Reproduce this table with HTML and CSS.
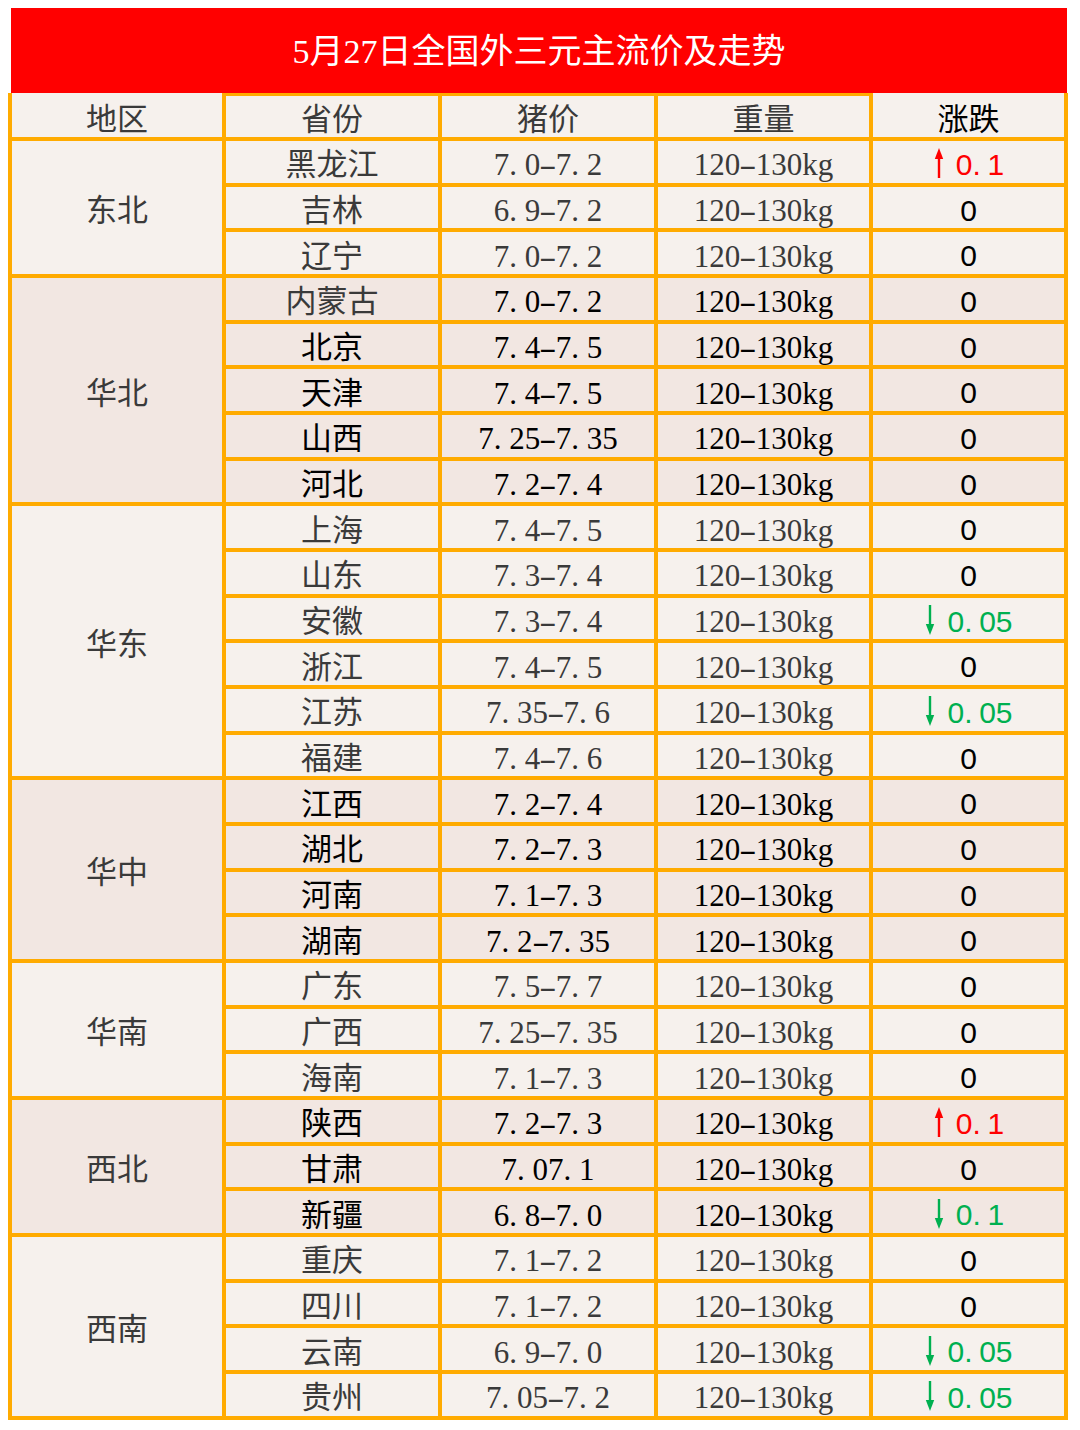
FILE: index.html
```html
<!DOCTYPE html>
<html lang="zh-CN">
<head>
<meta charset="utf-8">
<title>5月27日全国外三元主流价及走势</title>
<link rel="stylesheet" href="styles.css">
</head>
<body>
<div class="page">
  <div class="title">5月27日全国外三元主流价及走势</div>
  <div class="sheet">
    <div class="cell hd edge">地区</div>
    <div class="cell hd">省份</div>
    <div class="cell hd">猪价</div>
    <div class="cell hd">重量</div>
    <div class="cell hd edge k">涨跌</div>

    <div class="cell s3">东北</div>
    <div class="cell">黑龙江</div><div class="cell">7<span class="p">.</span>0<span class="m">-</span>7<span class="p">.</span>2</div><div class="cell">120<span class="m">-</span>130kg</div><div class="cell chg up"><svg class="ar" viewBox="0 0 12 30"><path d="M6 9V30"/><polygon points="6,0 1.8,11 10.2,11"/></svg>0<span class="p">.</span>1</div>
    <div class="cell">吉林</div><div class="cell">6<span class="p">.</span>9<span class="m">-</span>7<span class="p">.</span>2</div><div class="cell">120<span class="m">-</span>130kg</div><div class="cell chg">0</div>
    <div class="cell">辽宁</div><div class="cell">7<span class="p">.</span>0<span class="m">-</span>7<span class="p">.</span>2</div><div class="cell">120<span class="m">-</span>130kg</div><div class="cell chg">0</div>

    <div class="cell s5 d">华北</div>
    <div class="cell d">内蒙古</div><div class="cell d k">7<span class="p">.</span>0<span class="m">-</span>7<span class="p">.</span>2</div><div class="cell d k">120<span class="m">-</span>130kg</div><div class="cell d chg">0</div>
    <div class="cell d k">北京</div><div class="cell d k">7<span class="p">.</span>4<span class="m">-</span>7<span class="p">.</span>5</div><div class="cell d k">120<span class="m">-</span>130kg</div><div class="cell d chg">0</div>
    <div class="cell d k">天津</div><div class="cell d k">7<span class="p">.</span>4<span class="m">-</span>7<span class="p">.</span>5</div><div class="cell d k">120<span class="m">-</span>130kg</div><div class="cell d chg">0</div>
    <div class="cell d k">山西</div><div class="cell d k">7<span class="p">.</span>25<span class="m">-</span>7<span class="p">.</span>35</div><div class="cell d k">120<span class="m">-</span>130kg</div><div class="cell d chg">0</div>
    <div class="cell d k">河北</div><div class="cell d k">7<span class="p">.</span>2<span class="m">-</span>7<span class="p">.</span>4</div><div class="cell d k">120<span class="m">-</span>130kg</div><div class="cell d chg">0</div>

    <div class="cell s6">华东</div>
    <div class="cell">上海</div><div class="cell">7<span class="p">.</span>4<span class="m">-</span>7<span class="p">.</span>5</div><div class="cell">120<span class="m">-</span>130kg</div><div class="cell chg">0</div>
    <div class="cell">山东</div><div class="cell">7<span class="p">.</span>3<span class="m">-</span>7<span class="p">.</span>4</div><div class="cell">120<span class="m">-</span>130kg</div><div class="cell chg">0</div>
    <div class="cell">安徽</div><div class="cell">7<span class="p">.</span>3<span class="m">-</span>7<span class="p">.</span>4</div><div class="cell">120<span class="m">-</span>130kg</div><div class="cell chg dn"><svg class="ar" viewBox="0 0 12 30"><path d="M6 0V21"/><polygon points="6,30 1.8,19 10.2,19"/></svg>0<span class="p">.</span>05</div>
    <div class="cell">浙江</div><div class="cell">7<span class="p">.</span>4<span class="m">-</span>7<span class="p">.</span>5</div><div class="cell">120<span class="m">-</span>130kg</div><div class="cell chg">0</div>
    <div class="cell">江苏</div><div class="cell">7<span class="p">.</span>35<span class="m">-</span>7<span class="p">.</span>6</div><div class="cell">120<span class="m">-</span>130kg</div><div class="cell chg dn"><svg class="ar" viewBox="0 0 12 30"><path d="M6 0V21"/><polygon points="6,30 1.8,19 10.2,19"/></svg>0<span class="p">.</span>05</div>
    <div class="cell">福建</div><div class="cell">7<span class="p">.</span>4<span class="m">-</span>7<span class="p">.</span>6</div><div class="cell">120<span class="m">-</span>130kg</div><div class="cell chg">0</div>

    <div class="cell s4 d">华中</div>
    <div class="cell d k">江西</div><div class="cell d k">7<span class="p">.</span>2<span class="m">-</span>7<span class="p">.</span>4</div><div class="cell d k">120<span class="m">-</span>130kg</div><div class="cell d chg">0</div>
    <div class="cell d k">湖北</div><div class="cell d k">7<span class="p">.</span>2<span class="m">-</span>7<span class="p">.</span>3</div><div class="cell d k">120<span class="m">-</span>130kg</div><div class="cell d chg">0</div>
    <div class="cell d k">河南</div><div class="cell d k">7<span class="p">.</span>1<span class="m">-</span>7<span class="p">.</span>3</div><div class="cell d k">120<span class="m">-</span>130kg</div><div class="cell d chg">0</div>
    <div class="cell d k">湖南</div><div class="cell d k">7<span class="p">.</span>2<span class="m">-</span>7<span class="p">.</span>35</div><div class="cell d k">120<span class="m">-</span>130kg</div><div class="cell d chg">0</div>

    <div class="cell s3">华南</div>
    <div class="cell">广东</div><div class="cell">7<span class="p">.</span>5<span class="m">-</span>7<span class="p">.</span>7</div><div class="cell">120<span class="m">-</span>130kg</div><div class="cell chg">0</div>
    <div class="cell">广西</div><div class="cell">7<span class="p">.</span>25<span class="m">-</span>7<span class="p">.</span>35</div><div class="cell">120<span class="m">-</span>130kg</div><div class="cell chg">0</div>
    <div class="cell">海南</div><div class="cell">7<span class="p">.</span>1<span class="m">-</span>7<span class="p">.</span>3</div><div class="cell">120<span class="m">-</span>130kg</div><div class="cell chg">0</div>

    <div class="cell s3 d">西北</div>
    <div class="cell d k">陕西</div><div class="cell d k">7<span class="p">.</span>2<span class="m">-</span>7<span class="p">.</span>3</div><div class="cell d k">120<span class="m">-</span>130kg</div><div class="cell d chg up"><svg class="ar" viewBox="0 0 12 30"><path d="M6 9V30"/><polygon points="6,0 1.8,11 10.2,11"/></svg>0<span class="p">.</span>1</div>
    <div class="cell d k">甘肃</div><div class="cell d k">7<span class="p">.</span>07<span class="p">.</span>1</div><div class="cell d k">120<span class="m">-</span>130kg</div><div class="cell d chg">0</div>
    <div class="cell d k">新疆</div><div class="cell d k">6<span class="p">.</span>8<span class="m">-</span>7<span class="p">.</span>0</div><div class="cell d k">120<span class="m">-</span>130kg</div><div class="cell d chg dn"><svg class="ar" viewBox="0 0 12 30"><path d="M6 0V21"/><polygon points="6,30 1.8,19 10.2,19"/></svg>0<span class="p">.</span>1</div>

    <div class="cell s4">西南</div>
    <div class="cell">重庆</div><div class="cell">7<span class="p">.</span>1<span class="m">-</span>7<span class="p">.</span>2</div><div class="cell">120<span class="m">-</span>130kg</div><div class="cell chg">0</div>
    <div class="cell">四川</div><div class="cell">7<span class="p">.</span>1<span class="m">-</span>7<span class="p">.</span>2</div><div class="cell">120<span class="m">-</span>130kg</div><div class="cell chg">0</div>
    <div class="cell">云南</div><div class="cell">6<span class="p">.</span>9<span class="m">-</span>7<span class="p">.</span>0</div><div class="cell">120<span class="m">-</span>130kg</div><div class="cell chg dn"><svg class="ar" viewBox="0 0 12 30"><path d="M6 0V21"/><polygon points="6,30 1.8,19 10.2,19"/></svg>0<span class="p">.</span>05</div>
    <div class="cell">贵州</div><div class="cell">7<span class="p">.</span>05<span class="m">-</span>7<span class="p">.</span>2</div><div class="cell">120<span class="m">-</span>130kg</div><div class="cell chg dn"><svg class="ar" viewBox="0 0 12 30"><path d="M6 0V21"/><polygon points="6,30 1.8,19 10.2,19"/></svg>0<span class="p">.</span>05</div>
  </div>
</div>
</body>
</html>
```

FILE: styles.css
```css
html, body {
  margin: 0;
  padding: 0;
  background: #ffffff;
}

body {
  font-family: "Liberation Serif", "Noto Sans CJK SC", serif;
}

.page {
  padding-top: 8px;
}

.title {
  margin: 0 13px 0 11px;
  height: 85px;
  background: #ff0000;
  color: #ffffff;
  font-size: 34px;
  line-height: 1;
  display: flex;
  align-items: center;
  justify-content: center;
  padding-top: 3px;
  box-sizing: border-box;
}

.sheet {
  margin-left: 8px;
  width: 1060px;
  box-sizing: border-box;
  display: grid;
  grid-template-columns: 210px 212px 212px 211px 191px;
  grid-template-rows: 41px;
  grid-auto-rows: 41.68px;
  gap: 4px;
  padding: 3px 4px 4px 4px;
  background: #ffab00;
}

.cell {
  display: flex;
  align-items: center;
  justify-content: center;
  box-sizing: border-box;
  padding-top: 6px;
  font-size: 31px;
  line-height: 1;
  color: #3a3a3a;
  background: #f6f1ed;
  white-space: nowrap;
}

.cell.d {
  background: #f2e7e2;
}

.cell.k {
  color: #000000;
}

.hd.edge {
  margin-top: -3px;
  padding-top: 9px;
}

.s3 { grid-row: span 3; }
.s4 { grid-row: span 4; }
.s5 { grid-row: span 5; }
.s6 { grid-row: span 6; }

.p {
  display: inline-block;
  width: 0.5em;
  text-align: left;
}

.m {
  display: inline-block;
  width: 0.5em;
  text-align: center;
  transform: scaleX(1.7);
}

.chg {
  font-family: "Liberation Sans", "Noto Sans CJK SC", sans-serif;
  font-size: 30px;
  color: #000000;
}

.chg.up {
  color: #ff0000;
}

.chg.dn {
  color: #00b050;
}

.ar {
  width: 12px;
  height: 30px;
  margin-right: 11px;
  margin-top: -3px;
  flex: none;
}

.ar path {
  stroke: currentColor;
  stroke-width: 2.4;
  fill: none;
}

.ar polygon {
  fill: currentColor;
}
```
